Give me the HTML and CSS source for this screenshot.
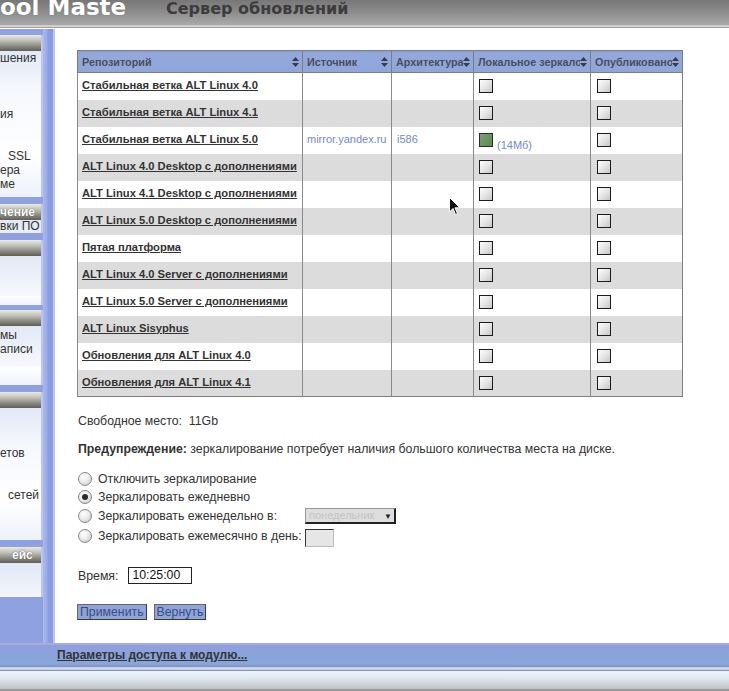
FILE: index.html
```html
<!DOCTYPE html>
<html lang="ru">
<head>
<meta charset="utf-8">
<title>Сервер обновлений</title>
<link rel="stylesheet" href="styles.css">
</head>
<body>
<header class="topbar">
  <div class="brand">ool Maste</div>
  <div class="page-title">Сервер обновлений</div>
</header>
<div class="layout">
  <aside class="sidebar">
    <section class="panel">
      <div class="panel-head"></div>
      <div class="panel-body body-1">
        <div class="side-item">шения</div>
        <div class="side-item gap-3">ия</div>
        <div class="side-item gap-2 ind">SSL</div>
        <div class="side-item">ера</div>
        <div class="side-item">ме</div>
      </div>
    </section>
    <section class="panel">
      <div class="panel-head">чение</div>
      <div class="panel-body body-2">
        <div class="side-item">вки ПО</div>
      </div>
    </section>
    <section class="panel tight">
      <div class="panel-head"></div>
      <div class="panel-body body-3"></div>
    </section>
    <section class="panel">
      <div class="panel-head"></div>
      <div class="panel-body body-4">
        <div class="side-item">мы</div>
        <div class="side-item">аписи</div>
      </div>
    </section>
    <section class="panel">
      <div class="panel-head"></div>
      <div class="panel-body body-5">
        <div class="side-item gap-2">етов</div>
        <div class="side-item gap-2 ind">сетей</div>
      </div>
    </section>
    <section class="panel">
      <div class="panel-head ind">ейс</div>
      <div class="panel-body body-6"></div>
    </section>
  </aside>

  <main class="main">
    <table class="repos">
      <colgroup>
        <col class="c-repo"><col class="c-src"><col class="c-arch"><col class="c-local"><col class="c-pub">
      </colgroup>
      <thead>
        <tr>
          <th><div class="th-in"><span class="th-text">Репозиторий</span><svg class="sort" viewBox="0 0 7 10" width="7" height="10"><path d="M3.5 0 L7 4 L0 4 Z M0 6 L7 6 L3.5 10 Z"/></svg></div></th>
          <th><div class="th-in"><span class="th-text">Источник</span><svg class="sort" viewBox="0 0 7 10" width="7" height="10"><path d="M3.5 0 L7 4 L0 4 Z M0 6 L7 6 L3.5 10 Z"/></svg></div></th>
          <th><div class="th-in"><span class="th-text">Архитектура</span><svg class="sort" viewBox="0 0 7 10" width="7" height="10"><path d="M3.5 0 L7 4 L0 4 Z M0 6 L7 6 L3.5 10 Z"/></svg></div></th>
          <th><div class="th-in"><span class="th-text">Локальное зеркало</span><svg class="sort" viewBox="0 0 7 10" width="7" height="10"><path d="M3.5 0 L7 4 L0 4 Z M0 6 L7 6 L3.5 10 Z"/></svg></div></th>
          <th><div class="th-in"><span class="th-text">Опубликовано</span><svg class="sort" viewBox="0 0 7 10" width="7" height="10"><path d="M3.5 0 L7 4 L0 4 Z M0 6 L7 6 L3.5 10 Z"/></svg></div></th>
        </tr>
      </thead>
      <tbody>
        <tr><td><a href="#">Стабильная ветка ALT Linux 4.0</a></td><td></td><td></td><td><span class="cb"></span></td><td><span class="cb"></span></td></tr>
        <tr><td><a href="#">Стабильная ветка ALT Linux 4.1</a></td><td></td><td></td><td><span class="cb"></span></td><td><span class="cb"></span></td></tr>
        <tr><td><a href="#">Стабильная ветка ALT Linux 5.0</a></td><td class="muted">mirror.yandex.ru</td><td class="muted">i586</td><td><span class="cb on"></span><span class="size">(14Мб)</span></td><td><span class="cb"></span></td></tr>
        <tr><td><a href="#">ALT Linux 4.0 Desktop с дополнениями</a></td><td></td><td></td><td><span class="cb"></span></td><td><span class="cb"></span></td></tr>
        <tr><td><a href="#">ALT Linux 4.1 Desktop с дополнениями</a></td><td></td><td></td><td><span class="cb"></span></td><td><span class="cb"></span></td></tr>
        <tr><td><a href="#">ALT Linux 5.0 Desktop с дополнениями</a></td><td></td><td></td><td><span class="cb"></span></td><td><span class="cb"></span></td></tr>
        <tr><td><a href="#">Пятая платформа</a></td><td></td><td></td><td><span class="cb"></span></td><td><span class="cb"></span></td></tr>
        <tr><td><a href="#">ALT Linux 4.0 Server с дополнениями</a></td><td></td><td></td><td><span class="cb"></span></td><td><span class="cb"></span></td></tr>
        <tr><td><a href="#">ALT Linux 5.0 Server с дополнениями</a></td><td></td><td></td><td><span class="cb"></span></td><td><span class="cb"></span></td></tr>
        <tr><td><a href="#">ALT Linux Sisyphus</a></td><td></td><td></td><td><span class="cb"></span></td><td><span class="cb"></span></td></tr>
        <tr><td><a href="#">Обновления для ALT Linux 4.0</a></td><td></td><td></td><td><span class="cb"></span></td><td><span class="cb"></span></td></tr>
        <tr><td><a href="#">Обновления для ALT Linux 4.1</a></td><td></td><td></td><td><span class="cb"></span></td><td><span class="cb"></span></td></tr>
      </tbody>
    </table>

    <p class="free">Свободное место:&nbsp; 11Gb</p>
    <p class="warn"><b>Предупреждение:</b> зеркалирование потребует наличия большого количества места на диске.</p>

    <div class="modes">
      <label class="mode r1"><span class="radio"></span>Отключить зеркалирование</label><span class="r1"></span>
      <label class="mode r2"><span class="radio on"></span>Зеркалировать ежедневно</label><span class="r2"></span>
      <label class="mode r3"><span class="radio"></span>Зеркалировать еженедельно в:</label>
      <span class="r3"><span class="select">понедельник<span class="sel-arrow">▼</span></span></span>
      <label class="mode r4"><span class="radio"></span>Зеркалировать ежемесячно в день:</label>
      <span class="r4"><span class="daybox"></span></span>
    </div>

    <div class="time-row">
      <span>Время:</span>
      <span class="timebox">10:25:00</span>
    </div>

    <div class="buttons">
      <button class="btn">Применить</button>
      <button class="btn">Вернуть</button>
    </div>

    <svg class="cursor" width="12" height="19" viewBox="0 0 12 19"><path d="M0.5 0.5 L0.5 15 L4 11.5 L6.5 17.5 L8.5 16.6 L6 10.8 L11 10.8 Z" fill="#111" stroke="#fff" stroke-width="1"/></svg>
  </main>
</div>
<footer class="footbar"><a href="#">Параметры доступа к модулю...</a></footer>
<div class="statusbar"></div>
</body>
</html>
```
FILE: styles.css
```css
* { box-sizing: border-box; }
html, body { margin: 0; padding: 0; }
body {
  width: 729px;
  height: 691px;
  overflow: hidden;
  font-family: "Liberation Sans", Arial, sans-serif;
  font-size: 12.3px;
  color: #333;
  background: #fff;
}

/* top bar */
.topbar {
  height: 29px;
  display: flex;
  align-items: flex-start;
  overflow: hidden;
  background: linear-gradient(#777 0, #8c8c8c 12px, #a9a9a9 25px, #c4c4c4 25px, #dcdcdc 27px, #a0a0a0 27px, #a0a0a0 28px, #fff 28px);
}
.brand {
  flex: none;
  width: 166px;
  margin-top: -4px;
  font-family: "DejaVu Sans", sans-serif;
  font-weight: bold;
  font-size: 23px;
  line-height: 22px;
  color: #fff;
  white-space: nowrap;
  text-shadow: 0 0 1px #666;
}
.page-title {
  margin-top: 0;
  font-family: "DejaVu Sans", sans-serif;
  font-weight: bold;
  font-size: 16px;
  line-height: 18px;
  color: #3c3c3c;
  white-space: nowrap;
}

/* layout */
.layout {
  display: flex;
  height: 614px;
}
.sidebar {
  flex: none;
  width: 53px;
  padding-top: 6px;
  background: linear-gradient(to right, #8fa1e1 0, #8fa1e1 43px, #aab9ee 43px, #9aabe6 47px, #8a9cdf 48px, #8a9cdf 53px);
}
.panel {
  width: 43px;
  margin-bottom: 7px;
  border-right: 2px solid #b9c7f2;
  overflow: hidden;
}
.panel.tight { margin-bottom: 5px; }
.panel-head {
  height: 16px;
  background: linear-gradient(#ecece6 0, #c0c0b8 35%, #8a8a82 70%, #5e5e56 100%);
  color: #fff;
  font-weight: bold;
  font-size: 12px;
  line-height: 17px;
  white-space: nowrap;
  text-shadow: 0 0 1px #333;
}
.panel-body {
  background: linear-gradient(#e3e8f6 0, #f6f8fd 40px, #fff 70%, #eef2fb 100%);
  white-space: nowrap;
  line-height: 14px;
  font-size: 12px;
  color: #333;
}
.body-1 { height: 146px; }
.body-2 { height: 13px; line-height: 13px; }
.body-3 { height: 49px; }
.body-4 { height: 59px; padding-top: 2px; }
.body-5 { height: 132px; padding-top: 10px; }
.body-6 { height: 34px; }
.gap-2 { margin-top: 28px; }
.gap-3 { margin-top: 42px; }
.ind { padding-left: 8px; }
.panel-head.ind { padding-left: 12px; }

/* main */
.main {
  position: relative;
  flex: 1;
  border-left: 2px solid #bcc8f0;
  padding: 21px 0 0 22px;
  background: #fff;
}

.repos {
  width: 605px;
  border-collapse: collapse;
  table-layout: fixed;
  border: 1px solid #7d7d7d;
}
.c-repo { width: 225px; }
.c-src { width: 89px; }
.c-arch { width: 82px; }
.c-local { width: 117px; }
.c-pub { width: 92px; }

.repos th {
  height: 22px;
  padding: 0;
  background: linear-gradient(#8799cf 0, #93a9dc 2px, #8fa6da 100%);
  border-left: 1px solid #7d7d7d;
  border-bottom: 1px solid #7d7d7d;
  text-align: left;
}
.th-in {
  display: flex;
  align-items: center;
  padding: 0 3px 0 4px;
}
.th-text {
  flex: 1;
  min-width: 0;
  overflow: hidden;
  white-space: nowrap;
  font-size: 10.8px;
  font-weight: bold;
  color: #4a4e5c;
}
.sort { flex: none; fill: #3a3a48; margin-left: 0; }

.repos td {
  height: 27px;
  padding: 5px 4px 0 4px;
  vertical-align: top;
  border-left: 1px solid #8a8a8a;
  line-height: 14px;
  font-size: 11px;
  white-space: nowrap;
  overflow: hidden;
}
.repos tbody tr:nth-child(even) td { background: #dcdcdc; }
.repos td:nth-child(4) { padding-left: 5px; }
.repos td:nth-child(5) { padding-left: 6px; }
.repos a {
  color: #333;
  font-weight: bold;
  font-size: 11.2px;
  text-decoration: underline;
}
.muted { color: #7189cf; }
.repos td.muted:nth-child(3) { padding-left: 5px; }

.cb {
  display: inline-block;
  vertical-align: top;
  width: 14px;
  height: 14px;
  margin-top: 1px;
  border: 1px solid #1c1c1c;
  background: linear-gradient(135deg, #fdfdfd 0, #e6e6e6 50%, #c8c8c8 100%);
}
.cb.on {
  background: linear-gradient(135deg, #7aa073 0, #5d8a56 100%);
  border-color: #2b2b2b;
}
.size {
  display: inline-block;
  vertical-align: top;
  margin: 6px 0 0 4px;
  color: #7189cf;
}

.free { margin: 17px 0 0 1px; line-height: 15px; }
.warn { margin: 13px 0 0 1px; line-height: 15px; }
.warn b { color: #333; }

.modes {
  display: grid;
  grid-template-columns: 228px auto;
  grid-template-rows: 18px 18px 20px 20px;
  align-items: center;
  margin-top: 13px;
}
.mode {
  display: flex;
  align-items: center;
  gap: 6px;
  white-space: nowrap;
}
.radio {
  flex: none;
  width: 14px;
  height: 14px;
  margin-left: 1px;
  border-radius: 50%;
  border: 1px solid #8a8a8a;
  background: radial-gradient(circle at 40% 35%, #fff 0, #ececec 45%, #bdbdbd 100%);
  position: relative;
}
.radio.on::after {
  content: "";
  position: absolute;
  left: 3px; top: 3px;
  width: 6px; height: 6px;
  border-radius: 50%;
  background: #2a2a2a;
}
.select {
  position: relative;
  display: inline-block;
  vertical-align: middle;
  width: 91px;
  height: 16px;
  padding-left: 3px;
  border: 1px solid #999;
  border-right: 2px solid #222;
  border-bottom: 2px solid #222;
  background: #dedede;
  color: #c4c4c4;
  font-size: 11px;
  line-height: 13px;
}
.sel-arrow {
  position: absolute;
  right: 2px;
  top: 1px;
  font-size: 8px;
  color: #222;
}
.daybox {
  display: inline-block;
  vertical-align: middle;
  width: 29px;
  height: 18px;
  margin-top: 4px;
  border: 1px solid;
  border-color: #333 #bbb #bbb #333;
  background: #e6e6e6;
}

.time-row {
  display: flex;
  align-items: center;
  gap: 10px;
  margin: 21px 0 0 1px;
}
.timebox {
  display: inline-block;
  width: 64px;
  height: 17px;
  padding-left: 3px;
  border: 1px solid #222;
  line-height: 15px;
  color: #111;
}

.buttons {
  display: flex;
  gap: 7px;
  margin-top: 20px;
}
.btn {
  height: 16px;
  padding: 0 2px;
  border: 1px solid #3a3a3a;
  border-top-color: #666;
  border-left-color: #666;
  background: #8ea5dc;
  color: #3d4c7e;
  font-family: "Liberation Sans", Arial, sans-serif;
  font-size: 12.3px;
  line-height: 13px;
}

.cursor {
  position: absolute;
  left: 394px;
  top: 168px;
}

/* footer */
.footbar {
  height: 27px;
  padding: 3px 0 0 57px;
  border-top: 2px solid #a7aed4;
  background: linear-gradient(#909ee0 0, #86a8d8 18px, #8d9fe0 20px, #7e8cb8 22px, #c9d2e6 22px);
}
.footbar a {
  color: #333;
  font-weight: bold;
  font-size: 12px;
  line-height: 14px;
  text-decoration: underline;
}
.statusbar {
  height: 21px;
  border-top: 1px solid #8090b0;
  border-bottom: 2px solid #999;
  background: linear-gradient(#eef6fc 0, #dfe8ef 40%, #bcc3c8 100%);
}
```
